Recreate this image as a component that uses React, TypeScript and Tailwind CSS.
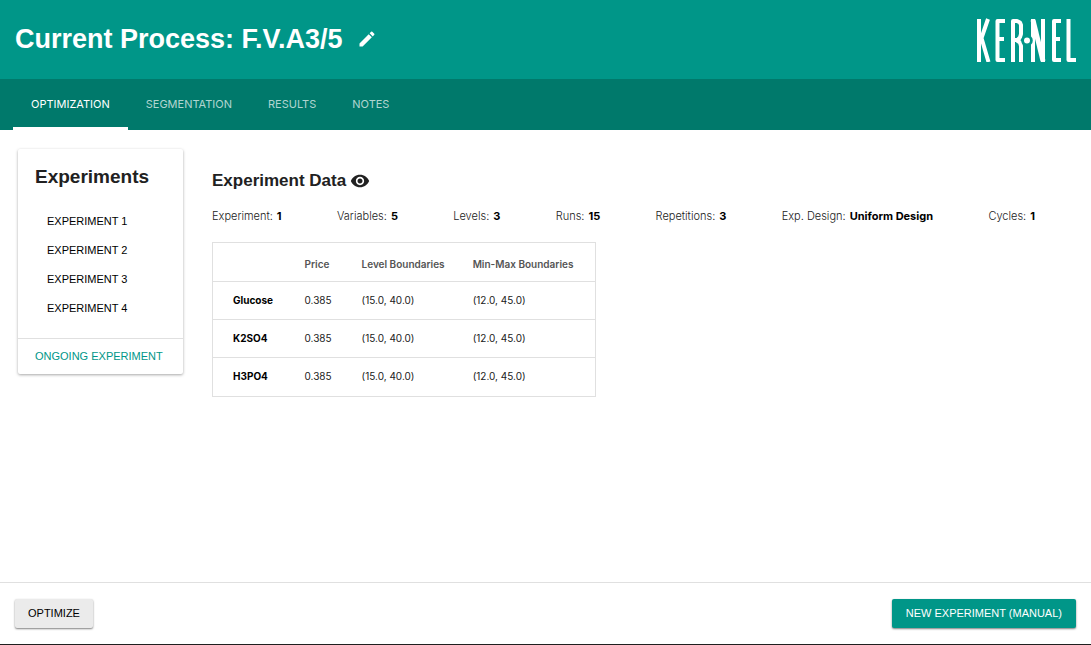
import { MdEdit, MdVisibility } from "react-icons/md";

const tabs = ["Optimization", "Segmentation", "Results", "Notes"];
const experiments = ["Experiment 1", "Experiment 2", "Experiment 3", "Experiment 4"];
const facts = [
  ["Experiment", "1"],
  ["Variables", "5"],
  ["Levels", "3"],
  ["Runs", "15"],
  ["Repetitions", "3"],
  ["Exp. Design", "Uniform Design"],
  ["Cycles", "1"],
];
const rows = ["Glucose", "K2SO4", "H3PO4"];

function Logo() {
  return (
    <svg
      role="img"
      aria-label="Kernel"
      viewBox="0 0 100 44"
      className="h-11 w-[100px] shrink-0"
      fill="none"
      stroke="white"
      strokeWidth="4"
      strokeLinejoin="round"
    >
      <line x1="3" y1="1" x2="3" y2="44" />
      <polyline points="12,1 5.5,20 12.5,44" />
      <polyline points="29,3 21.5,3 21.5,42 29,42" />
      <line x1="21" y1="21" x2="28" y2="21" />
      <polyline points="37,44 37,3 41,3 44,4.5 45,7 45,16 44,19.5 41.5,22 37,22" />
      <polyline points="41,22.5 44,24.5 45,28 45,44" />
      <line x1="57" y1="1" x2="57" y2="44" />
      <line x1="67" y1="1" x2="67" y2="44" />
      <line x1="57" y1="2" x2="67" y2="43" strokeWidth="5" />
      <polyline points="85,3 78,3 78,42 85,42" />
      <line x1="77" y1="21" x2="84" y2="21" />
      <polyline points="92.5,1 92.5,42 100,42" />
      <circle cx="51" cy="22.5" r="4.4" fill="white" stroke="#009688" strokeWidth="2.8" />
    </svg>
  );
}

export default function App() {
  return (
    <div className="flex min-h-screen flex-col border-b border-[#1f1f1f] bg-white font-['Inter',sans-serif] text-[#212121]">
      <header className="flex h-[79px] items-center justify-between bg-[#009688] px-[15px] text-white">
        <div className="flex items-center gap-3.5 pb-0.5">
          <h1 className="font-['Liberation_Sans',sans-serif] text-[27px] leading-8 font-bold">Current Process: F.V.A3/5</h1>
          <button type="button" aria-label="Edit process name">
            <MdEdit className="size-5" />
          </button>
        </div>
        <Logo />
      </header>

      <nav className="flex h-[51px] bg-[#00796b] px-[13px] text-[11px]">
        {tabs.map((tab, i) => (
          <a
            key={tab}
            href={`#${tab.toLowerCase()}`}
            aria-current={i === 0 ? "page" : undefined}
            className={
              i === 0
                ? "flex items-center border-b-3 border-white px-[18px] pt-[3px] text-white uppercase"
                : "flex items-center border-b-3 border-transparent px-[18px] pt-[3px] text-white/70 uppercase"
            }
          >
            {tab}
          </a>
        ))}
      </nav>

      <main className="flex flex-1 items-start gap-[29px] px-[18px] pt-[19px]">
        <aside className="w-[165px] shrink-0 rounded-xs bg-white font-['Liberation_Sans',sans-serif] shadow-[0_1px_3px_rgba(0,0,0,0.35)]">
          <h2 className="px-[17px] pt-4 text-[19px] leading-6 font-bold">Experiments</h2>
          <ul className="px-[29px] pt-[18px] pb-[15px]">
            {experiments.map((name) => (
              <li key={name}>
                <button type="button" className="block h-[29px] text-[11px] text-black uppercase">
                  {name}
                </button>
              </li>
            ))}
          </ul>
          <button type="button" className="block h-9 w-full border-t border-[#e0e0e0] px-[17px] text-left text-[11px] text-[#009688] uppercase">
            Ongoing experiment
          </button>
        </aside>

        <section className="min-w-0 flex-1 pt-[22px]">
          <div className="flex items-center gap-1">
            <h2 className="font-['Liberation_Sans',sans-serif] text-[17px] leading-5 font-bold">Experiment Data</h2>
            <button type="button" aria-label="Toggle experiment data">
              <MdVisibility className="size-5" />
            </button>
          </div>
          <dl className="mt-[17px] mr-[38px] flex flex-wrap justify-between gap-x-4 text-[11px] leading-4">
            {facts.map(([label, value]) => (
              <div key={label} className="flex gap-1">
                <dt className="font-light">{label}:</dt>
                <dd className="font-bold text-black">{value}</dd>
              </div>
            ))}
          </dl>
          <table className="mt-[18px] border-collapse border border-[#e0e0e0] text-left text-[10px] leading-4">
            <thead>
              <tr className="h-[39px] border-b border-[#e0e0e0] text-[#555555]">
                <td className="w-[78px]" />
                <th scope="col" className="w-[57px] px-3.5 pt-1 font-semibold">Price</th>
                <th scope="col" className="px-3.5 pt-1 font-semibold">Level Boundaries</th>
                <th scope="col" className="pt-1 pr-[22px] pl-3.5 font-semibold">Min-Max Boundaries</th>
              </tr>
            </thead>
            <tbody>
              {rows.map((name) => (
                <tr key={name} className="h-[38px] border-b border-[#e0e0e0] last:h-[39px]">
                  <th scope="row" className="pr-3.5 pb-0.5 pl-5 font-bold text-black">{name}</th>
                  <td className="px-3.5 pb-0.5">0.385</td>
                  <td className="px-3.5 pb-0.5">(15.0, 40.0)</td>
                  <td className="px-3.5 pb-0.5">(12.0, 45.0)</td>
                </tr>
              ))}
            </tbody>
          </table>
        </section>
      </main>

      <footer className="flex h-[62px] items-center justify-between border-t border-[#e0e0e0] px-[15px] font-['Liberation_Sans',sans-serif] text-[11px]">
        <button type="button" className="h-[29px] rounded-xs bg-[#ebebeb] px-[13px] text-black uppercase shadow-[0_1px_2px_rgba(0,0,0,0.5)]">
          Optimize
        </button>
        <button type="button" className="h-[29px] rounded-xs bg-[#009688] px-3.5 text-white uppercase shadow-[0_1px_2px_rgba(0,0,0,0.5)]">
          New experiment (manual)
        </button>
      </footer>
    </div>
  );
}
